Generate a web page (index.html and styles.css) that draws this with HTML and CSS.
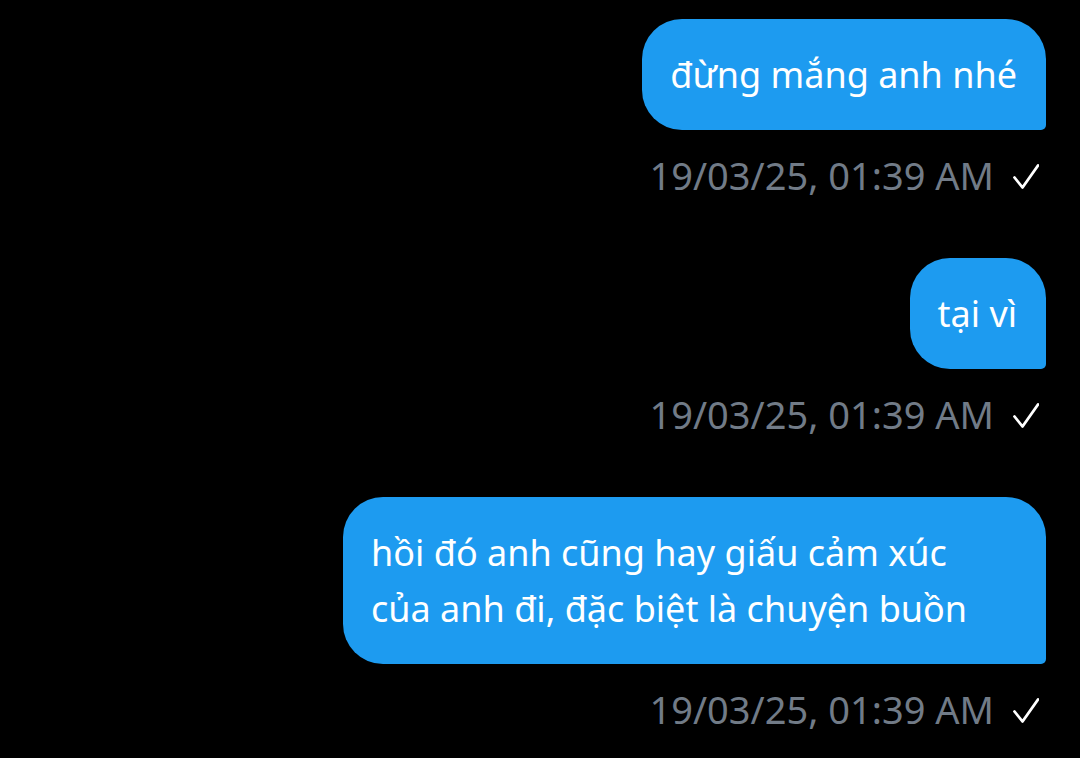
FILE: index.html
```html
<!DOCTYPE html>
<html lang="vi">
<head>
<meta charset="utf-8">
<link rel="stylesheet" href="styles.css">
</head>
<body>
<main class="chat">
  <div class="msg">
    <div class="bubble">đừng mắng anh nhé</div>
    <div class="meta"><span class="time">19/03/25, 01:39 AM</span><svg class="check" viewBox="0 0 26 26"><path d="M1.5 13.5 L9.5 23.5 L25 1.5" /></svg></div>
  </div>
  <div class="msg">
    <div class="bubble">tại vì</div>
    <div class="meta"><span class="time">19/03/25, 01:39 AM</span><svg class="check" viewBox="0 0 26 26"><path d="M1.5 13.5 L9.5 23.5 L25 1.5" /></svg></div>
  </div>
  <div class="msg">
    <div class="bubble bubble-wide">hồi đó anh cũng hay giấu cảm xúc<br>của anh đi, đặc biệt là chuyện buồn</div>
    <div class="meta"><span class="time">19/03/25, 01:39 AM</span><svg class="check" viewBox="0 0 26 26"><path d="M1.5 13.5 L9.5 23.5 L25 1.5" /></svg></div>
  </div>
</main>
</body>
</html>
```
FILE: styles.css
```css
html, body {
  margin: 0;
  padding: 0;
  background: #000;
  height: 100%;
  overflow: hidden;
}
.chat {
  display: flex;
  flex-direction: column;
  align-items: flex-end;
  padding: 19px 34px 0 0;
  gap: 56px;
  font-family: "Noto Sans", "Open Sans", sans-serif;
}
.msg {
  display: flex;
  flex-direction: column;
  align-items: flex-end;
}
.bubble {
  background: #1d9bf0;
  color: #fff;
  font-size: 36px;
  line-height: 56px;
  padding: 28px 29px 27px 28px;
  border-radius: 40px 40px 5px 40px;
  box-sizing: border-box;
}
.bubble-wide {
  width: 703px;
}
.meta {
  display: flex;
  align-items: center;
  margin-top: 18px;
  height: 54px;
  padding-right: 7px;
  gap: 19px;
}
.time {
  color: #717b87;
  font-size: 38px;
  line-height: 54px;
}
.check {
  width: 26px;
  height: 26px;
  margin-top: 4px;
  fill: none;
  stroke: #fff;
  stroke-width: 2.8;
  stroke-linecap: round;
  stroke-linejoin: round;
}
```
